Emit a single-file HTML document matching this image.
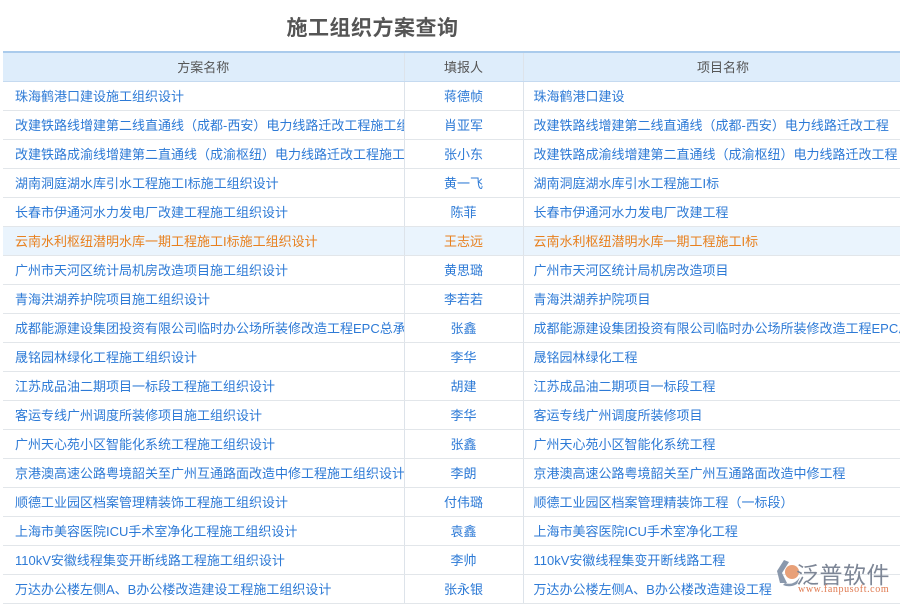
<!DOCTYPE html>
<html><head><meta charset="utf-8"><style>
*{margin:0;padding:0;box-sizing:border-box}
body{width:900px;height:600px;overflow:hidden;background:#fff;font-family:"Liberation Sans","Noto Sans CJK SC",sans-serif;position:relative}
h1{position:absolute;left:0;top:12px;width:745px;text-align:center;font-size:21px;font-weight:bold;color:#555;letter-spacing:0.5px}
table{position:absolute;left:3px;top:51px;border-collapse:collapse;table-layout:fixed;width:920px}
td,th{height:29px;font-size:13px;white-space:nowrap;overflow:hidden;border-bottom:1px solid #e2e6ea;border-right:1px solid #dde3ea;font-weight:normal}
th{background:#deedfb;color:#555;border-top:2px solid #aacbec;border-bottom:1px solid #c5daf0;text-align:center}
td{color:#2d7ad6;padding-left:12px}
td.c{text-align:center;padding-left:0}
td.p{padding-left:10px}
tr.hl td{background:#eaf4fd;color:#e8801e}
.logo{position:absolute;left:770px;top:553px;width:130px;height:47px}
</style></head><body>
<h1>施工组织方案查询</h1>
<table>
<colgroup><col style="width:401px"><col style="width:119px"><col style="width:400px"></colgroup>
<tr><th>方案名称</th><th>填报人</th><th>项目名称</th></tr>
<tr><td>珠海鹤港口建设施工组织设计</td><td class="c">蒋德帧</td><td class="p">珠海鹤港口建设</td></tr>
<tr><td>改建铁路线增建第二线直通线（成都-西安）电力线路迁改工程施工组织设计</td><td class="c">肖亚军</td><td class="p">改建铁路线增建第二线直通线（成都-西安）电力线路迁改工程</td></tr>
<tr><td>改建铁路成渝线增建第二直通线（成渝枢纽）电力线路迁改工程施工组织设计</td><td class="c">张小东</td><td class="p">改建铁路成渝线增建第二直通线（成渝枢纽）电力线路迁改工程</td></tr>
<tr><td>湖南洞庭湖水库引水工程施工I标施工组织设计</td><td class="c">黄一飞</td><td class="p">湖南洞庭湖水库引水工程施工I标</td></tr>
<tr><td>长春市伊通河水力发电厂改建工程施工组织设计</td><td class="c">陈菲</td><td class="p">长春市伊通河水力发电厂改建工程</td></tr>
<tr class="hl"><td>云南水利枢纽潜明水库一期工程施工I标施工组织设计</td><td class="c">王志远</td><td class="p">云南水利枢纽潜明水库一期工程施工I标</td></tr>
<tr><td>广州市天河区统计局机房改造项目施工组织设计</td><td class="c">黄思璐</td><td class="p">广州市天河区统计局机房改造项目</td></tr>
<tr><td>青海洪湖养护院项目施工组织设计</td><td class="c">李若若</td><td class="p">青海洪湖养护院项目</td></tr>
<tr><td>成都能源建设集团投资有限公司临时办公场所装修改造工程EPC总承包施工组织设计</td><td class="c">张鑫</td><td class="p">成都能源建设集团投资有限公司临时办公场所装修改造工程EPC总承包</td></tr>
<tr><td>晟铭园林绿化工程施工组织设计</td><td class="c">李华</td><td class="p">晟铭园林绿化工程</td></tr>
<tr><td>江苏成品油二期项目一标段工程施工组织设计</td><td class="c">胡建</td><td class="p">江苏成品油二期项目一标段工程</td></tr>
<tr><td>客运专线广州调度所装修项目施工组织设计</td><td class="c">李华</td><td class="p">客运专线广州调度所装修项目</td></tr>
<tr><td>广州天心苑小区智能化系统工程施工组织设计</td><td class="c">张鑫</td><td class="p">广州天心苑小区智能化系统工程</td></tr>
<tr><td>京港澳高速公路粤境韶关至广州互通路面改造中修工程施工组织设计</td><td class="c">李朗</td><td class="p">京港澳高速公路粤境韶关至广州互通路面改造中修工程</td></tr>
<tr><td>顺德工业园区档案管理精装饰工程施工组织设计</td><td class="c">付伟璐</td><td class="p">顺德工业园区档案管理精装饰工程（一标段）</td></tr>
<tr><td>上海市美容医院ICU手术室净化工程施工组织设计</td><td class="c">袁鑫</td><td class="p">上海市美容医院ICU手术室净化工程</td></tr>
<tr><td>110kV安徽线程集变开断线路工程施工组织设计</td><td class="c">李帅</td><td class="p">110kV安徽线程集变开断线路工程</td></tr>
<tr><td>万达办公楼左侧A、B办公楼改造建设工程施工组织设计</td><td class="c">张永银</td><td class="p">万达办公楼左侧A、B办公楼改造建设工程</td></tr>
</table>
<div class="logo">
<svg width="30" height="40" viewBox="0 0 30 40" style="position:absolute;left:1px;top:2px">
<path d="M6 16 L13 5 L18 7 L11 18 L16 28 L9 28 Z" fill="#8a98ac"/>
<circle cx="21" cy="17" r="7" fill="#e8a078"/>
<path d="M14 28 Q23 31 29 22 L26 29 Q19 33 12 30 Z" fill="#8a98ac"/>
</svg>
<div style="position:absolute;left:26px;top:3px;font-size:23px;color:#7d8696;letter-spacing:0.5px;white-space:nowrap">泛普软件</div>
<div style="position:absolute;left:28px;top:31px;font-size:10px;color:#e07a50;font-family:'Liberation Serif',serif;white-space:nowrap;letter-spacing:0.6px">www.fanpusoft.com</div>
</div>
</body></html>
